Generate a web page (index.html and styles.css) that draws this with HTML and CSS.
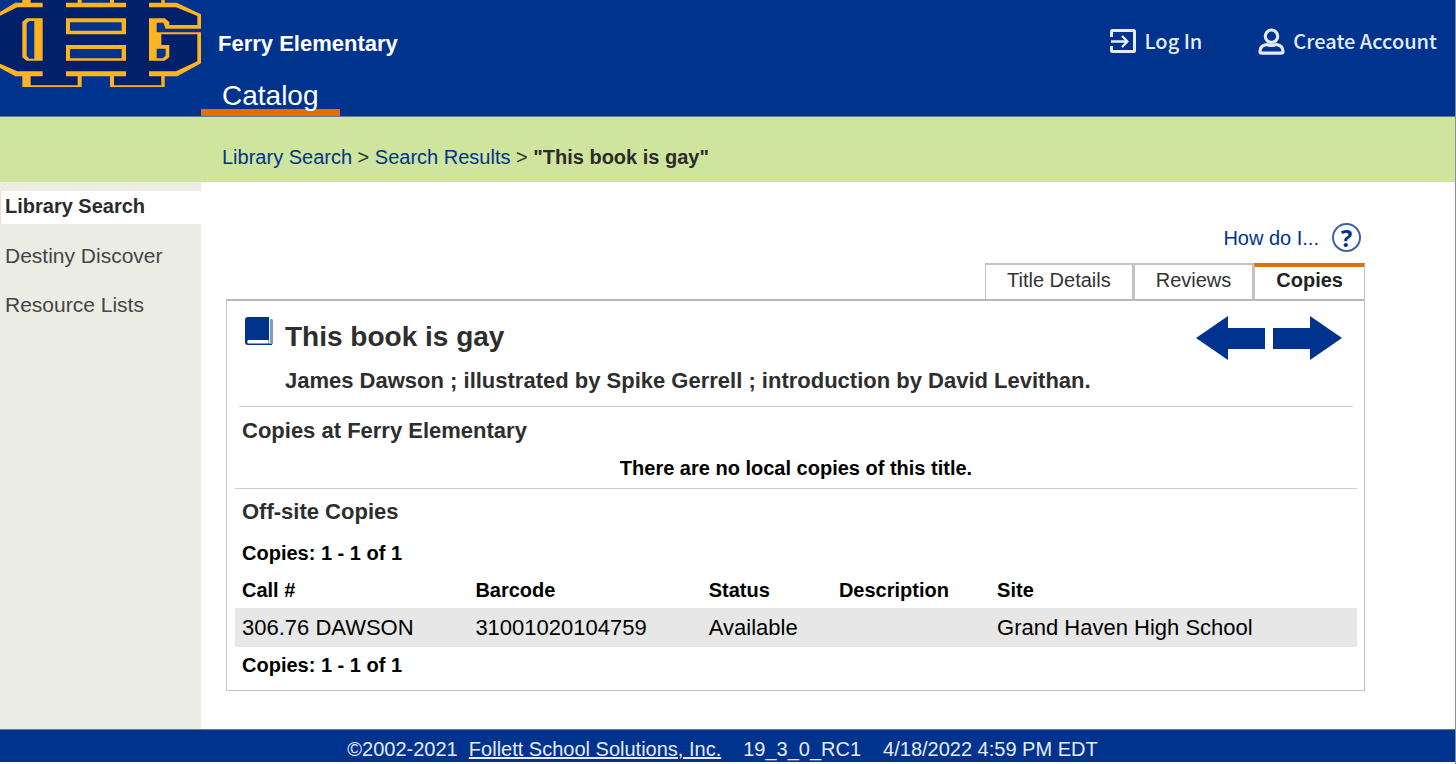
FILE: index.html
```html
<!DOCTYPE html>
<html lang="en">
<head>
<meta charset="utf-8">
<title>This book is gay - Ferry Elementary Catalog</title>
<link rel="stylesheet" href="styles.css">
</head>
<body>
<header class="header">
  <svg class="logo" viewBox="0 0 603 264" role="img" aria-label="District logo">
    <path fill="#00206a" d="M0 43 48 15H67V0H494V15H530L600 48V80H500V97H600V190L530 222H494V260H330V222H245V260H67V222H48L0 197Z"/>
    <path fill="#00338d" d="M245 0H330V8H245ZM75 60H120V180H75ZM203 60H373V98H203ZM203 140H373V178H203ZM455 62H490L500 86H603V97H455ZM455 140H503V178H455Z"/>
    <path fill="#ffb41f" fill-rule="evenodd" d="M67 0H92V8H128V22H52L0 47V36L46 8H67ZM233 0H245V8H330V0H342V8H378V22H198V8H233ZM484 0H494V8H530L603 43V86H497L490 68H470V97H603V190L532 229H494V261H330V229H245V261H67V229H46L0 204V191L52 214H128V229H92V256H233V229H198V214H378V229H342V256H484V229H447V214H528L592 184V103H484V135H508V172L494 182H447V55H494L508 66V75H592V48L528 22H447V8H484ZM80 55H128V182H80L67 172V65ZM88 63 80 70V168L88 176H103V63ZM198 55H378V103H198ZM210 67V92H365V67ZM198 135H378V182H198ZM210 147V175H365V147ZM470 146V175H488L497 167V146Z"/>
  </svg>
  <div class="site">
    <div class="school">Ferry Elementary</div>
    <nav><a class="catalog" href="#">Catalog</a></nav>
  </div>
  <div class="account">
    <a class="account-link" href="#">
      <svg class="login-icon" viewBox="0 0 26 24" fill="none" stroke="currentColor" stroke-width="3" stroke-linejoin="round"><path d="M1.500 8V2.500Q1.500 1.500 2.500 1.500H23.500Q24.500 1.500 24.500 2.500V21.500Q24.500 22.500 23.500 22.500H2.500Q1.500 22.500 1.500 21.500V17"/><path stroke-width="2.400" d="M1 12.500H17M12 7 17.500 12.500 12 18"/></svg>
      Log In
    </a>
    <a class="account-link" href="#">
      <svg class="user-icon" viewBox="0 0 27 27" fill="none" stroke="currentColor" stroke-width="3.200" stroke-linejoin="round"><circle cx="13.500" cy="8.200" r="6.200"/><path d="M8.500 16.500C4.500 17.200 2 20 2 23.500Q2 25.200 4 25.200H23Q25 25.200 25 23.500C25 20 22.500 17.200 18.500 16.500Q13.500 18.500 8.500 16.500Z"/></svg>
      Create Account
    </a>
  </div>
</header>
<nav class="crumbs" aria-label="Breadcrumb">
  <a href="#">Library Search</a> &gt; <a href="#">Search Results</a> &gt; <strong>"This book is gay"</strong>
</nav>
<div class="body">
  <nav class="sidebar">
    <a class="side-link active" href="#">Library Search</a>
    <a class="side-link" href="#">Destiny Discover</a>
    <a class="side-link" href="#">Resource Lists</a>
  </nav>
  <main class="content">
    <a class="help" href="#">How do I...
      <span class="help-icon">?</span>
    </a>
    <nav class="tabs">
      <a class="tab" href="#">Title Details</a>
      <a class="tab" href="#">Reviews</a>
      <a class="tab current" href="#">Copies</a>
    </nav>
    <section class="panel">
      <div class="title-block">
        <svg class="book-icon" viewBox="0 0 28 30"><path fill="#8497c6" d="M24 3H27Q28 3 28 5V28H24Z"/><path fill="#00338d" d="M3 1H24V28H27V29H3Q0 29 0 26V4Q0 1 3 1Z"/><path fill="#fff" d="M3 24H23.500V27.500H3Q1.500 26 3 24Z"/><path fill="#fff" d="M24 1H25V27H24Z"/></svg>
        <div class="title-text">
          <h1 class="title">This book is gay</h1>
          <p class="author">James Dawson ; illustrated by Spike Gerrell ; introduction by David Levithan.</p>
        </div>
        <div class="arrows">
          <a href="#" aria-label="Previous title"><svg class="arrow" viewBox="0 0 69 44"><path fill="#00338d" d="M0 22 32 0V12H69V33H32V44Z"/></svg></a>
          <a href="#" aria-label="Next title"><svg class="arrow" viewBox="0 0 69 44"><path fill="#00338d" d="M69 22 37 0V12H0V33H37V44Z"/></svg></a>
        </div>
      </div>
      <section class="local">
        <h2 class="section-title">Copies at Ferry Elementary</h2>
        <p class="message">There are no local copies of this title.</p>
      </section>
      <section class="offsite">
        <h2 class="section-title">Off-site Copies</h2>
        <p class="count">Copies: 1 - 1 of 1</p>
        <table class="copies">
          <thead><tr><th class="col-call">Call #</th><th class="col-barcode">Barcode</th><th class="col-status">Status</th><th class="col-desc">Description</th><th>Site</th></tr></thead>
          <tbody><tr><td>306.76 DAWSON</td><td>31001020104759</td><td>Available</td><td></td><td>Grand Haven High School</td></tr></tbody>
        </table>
        <p class="count last">Copies: 1 - 1 of 1</p>
      </section>
    </section>
  </main>
</div>
<footer class="footer">
  <span>©2002-2021&nbsp; <a href="#">Follett School Solutions, Inc.</a></span>
  <span>19_3_0_RC1</span>
  <span>4/18/2022 4:59 PM EDT</span>
</footer>
</body>
</html>
```

FILE: styles.css
```css
* { box-sizing: border-box; }
body {
  min-height: 100vh;
  margin: 0;
  border-right: 1px solid #8a8f98;
  background: #fff;
  color: #000;
  font: 20px/24px "Liberation Sans", Arial, sans-serif;
}
h1, h2, p { margin: 0; }
a { color: #00338d; text-decoration: none; }
svg { display: block; flex: none; }

.header {
  display: flex;
  min-height: 117px;
  background: #00338d;
  color: #fff;
  border-bottom: 1px solid #5c7f92;
}
.logo { width: 201px; height: 88px; }
.site {
  display: flex;
  flex-direction: column;
  justify-content: space-between;
  padding-top: 30px;
}
.school { padding-left: 17px; font-size: 22px; line-height: 28px; font-weight: bold; }
.catalog {
  display: block;
  width: 139px;
  height: 36px;
  padding-left: 21px;
  border-bottom: 7px solid #e07000;
  color: #fff;
  font-size: 28px;
  line-height: 32px;
}
.account {
  display: flex;
  align-items: flex-start;
  gap: 56px;
  margin-left: auto;
  padding: 26px 18px 0 0;
}
.account-link {
  display: flex;
  align-items: center;
  gap: 8px;
  color: #e6ebf5;
  font: 500 20px/30px "Noto Sans CJK SC", "Noto Sans", sans-serif;
}
.login-icon { width: 26px; height: 24px; }
.user-icon { width: 27px; height: 27px; }

.crumbs {
  padding: 28px 16px 13px 222px;
  background: #cfe59d;
  color: #333;
}
.crumbs strong { color: #2b2b2b; }

.body { display: flex; }
.sidebar {
  display: flex;
  flex-direction: column;
  flex: none;
  width: 201px;
  padding-top: 9px;
  background: #ebece4;
  gap: 16px;
}
.side-link { padding: 4px 5px 5px; color: #444; font-size: 21px; }
.side-link.active {
  padding: 3px 4px 6px;
  border-left: 1px solid #fbd9bd;
  background: #fff;
  color: #2b2b2b;
  font-size: 20px;
  font-weight: bold;
}

.content { flex: 1; padding: 41px 90px 38px 25px; }
.help {
  display: flex;
  align-items: center;
  justify-content: flex-end;
  gap: 13px;
  padding-right: 4px;
}
.help-icon {
  width: 29px;
  height: 29px;
  border: 2px solid #3d61a8;
  border-radius: 50%;
  font: bold 24px/26px "Noto Sans", sans-serif;
  text-align: center;
}
.tabs { display: flex; justify-content: flex-end; margin-top: 11px; }
.tab {
  padding: 3px 21px 7px;
  border: 2px solid #c3c3c3;
  border-width: 2px 2px 0 1px;
  color: #333;
}
.tab.current {
  padding-top: 1px;
  border-top: 4px solid #e07000;
  border-right-width: 1px;
  color: #222;
  font-weight: bold;
}
.panel {
  padding: 0 7px 0 8px;
  border: 1px solid #c3c3c3;
  border-top: 2px solid #b8b8b8;
}
.title-block {
  display: flex;
  align-items: flex-start;
  margin: 0 4px;
  padding: 15px 11px 11px 6px;
  border-bottom: 1px solid #ccc;
}
.book-icon { width: 28px; height: 30px; }
.title-text { flex: 1; padding: 5px 0 0 12px; color: #2e2e2e; }
.title { font-size: 28px; line-height: 32px; }
.author { margin-top: 14px; font-size: 22px; line-height: 28px; font-weight: bold; }
.arrows { display: flex; gap: 8px; }
.arrow { width: 69px; height: 44px; }

.section-title { padding-left: 7px; color: #2e2e2e; font-size: 22px; line-height: 28px; }
.local { padding: 10px 0 8px; border-bottom: 1px solid #ccc; }
.message { margin-top: 11px; font-weight: bold; text-align: center; }
.offsite { padding: 9px 0 13px; }
.count { margin-top: 15px; padding-left: 7px; font-weight: bold; }
.count.last { margin-top: 6px; }
.copies {
  width: 100%;
  margin-top: 13px;
  border-collapse: collapse;
  table-layout: fixed;
  text-align: left;
}
.copies th { padding: 0 0 6px 7px; }
.copies td {
  padding: 6px 0 5px 7px;
  background: #e7e7e7;
  font-size: 22px;
  line-height: 28px;
}
.col-call, .col-barcode { width: 20.8%; }
.col-status { width: 11.6%; }
.col-desc { width: 14.1%; }

.footer {
  display: flex;
  justify-content: center;
  gap: 22px;
  padding: 7px 10px 1px 0;
  border-top: 1px solid #5c7f92;
  background: #00338d;
  color: #e6ebf5;
}
.footer a { color: inherit; text-decoration: underline; }
```
